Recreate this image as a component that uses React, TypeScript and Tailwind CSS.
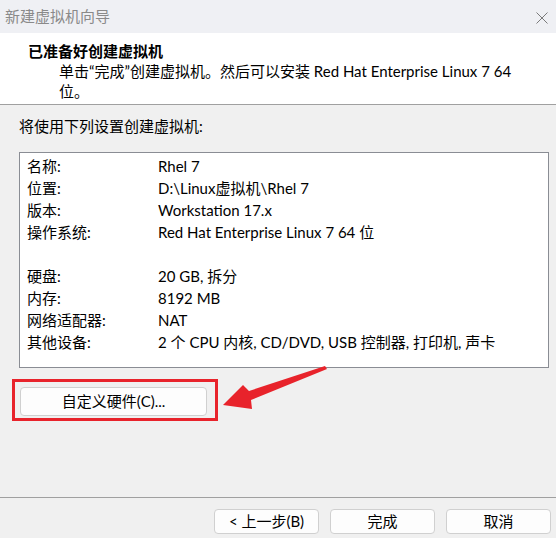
import React from "react";

const rows: [string, string][] = [
  ["名称:", "Rhel 7"],
  ["位置:", "D:\\Linux虚拟机\\Rhel 7"],
  ["版本:", "Workstation 17.x"],
  ["操作系统:", "Red Hat Enterprise Linux 7 64 位"],
  ["", ""],
  ["硬盘:", "20 GB, 拆分"],
  ["内存:", "8192 MB"],
  ["网络适配器:", "NAT"],
  ["其他设备:", "2 个 CPU 内核, CD/DVD, USB 控制器, 打印机, 声卡"],
];

const App = () => {
  return (
    <div
      className="relative w-[556px] h-[538px] flex flex-col bg-[#f0f0f0] overflow-hidden text-black"
      style={{ fontFamily: 'Lato, "Noto Sans CJK SC", sans-serif' }}
    >
      {/* title bar */}
      <div className="h-[33px] flex items-center justify-between pl-[5px] pr-[8px] bg-[#eff0f4]">
        <span className="text-[15px] text-[#8a8a8a] leading-none">新建虚拟机向导</span>
        <svg width="12" height="12" viewBox="0 0 12 12" className="mt-[2px]">
          <path d="M0.5 0.5 L11.5 11.5 M11.5 0.5 L0.5 11.5" stroke="#7a7a7a" strokeWidth="1" fill="none" />
        </svg>
      </div>

      {/* header */}
      <div className="h-[72px] bg-white border-b border-[#a0a0a0] pt-[8px]">
        <div className="pl-[28px] text-[15px] font-bold leading-[20px]">已准备好创建虚拟机</div>
        <div className="pl-[59px] text-[15px] leading-[20px]">
          单击“完成”创建虚拟机。然后可以安装 Red Hat Enterprise Linux 7 64
          <br />
          位。
        </div>
      </div>

      {/* body */}
      <div className="flex-1 flex flex-col">
        <div className="pt-[11px] pl-[19px] text-[15px] leading-[20px]">将使用下列设置创建虚拟机:</div>

        <div className="mt-[16px] ml-[19px] w-[530px] h-[216px] border border-[#8a8d94] bg-white pt-[2px] pl-[7px]">
          {rows.map(([k, v], i) => (
            <div key={i} className="grid grid-cols-[131px_1fr] h-[22px] items-center text-[15px] leading-[22px]">
              <span>{k}</span>
              <span>{v}</span>
            </div>
          ))}
        </div>

        <div className="mt-[11px] ml-[12px] w-[206px] h-[42px] border-[3px] border-[#e8232b] pl-[5px] pt-[5px]">
          <button className="w-[187px] h-[29px] rounded-[4px] border border-[#d0d0d0] bg-[#fdfdfd] text-[15px] leading-none">
            自定义硬件(C)...
          </button>
        </div>
      </div>

      {/* footer */}
      <div className="h-[41px] border-t border-[#a0a0a0] flex justify-end gap-[11px] pr-[5px] pt-[11px]">
        {["< 上一步(B)", "完成", "取消"].map((t) => (
          <button
            key={t}
            className="w-[105px] h-[25px] rounded-[4px] border border-[#d0d0d0] bg-[#fdfdfd] text-[15px] leading-none"
          >
            {t}
          </button>
        ))}
      </div>

      {/* annotation arrow */}
      <svg className="absolute left-0 top-0 pointer-events-none" width="556" height="538">
        <polygon
          points="325,366 249,391 243,385 223,405 252,409 251,400 327,369"
          fill="#e8232b"
        />
      </svg>
    </div>
  );
};

export default App;
